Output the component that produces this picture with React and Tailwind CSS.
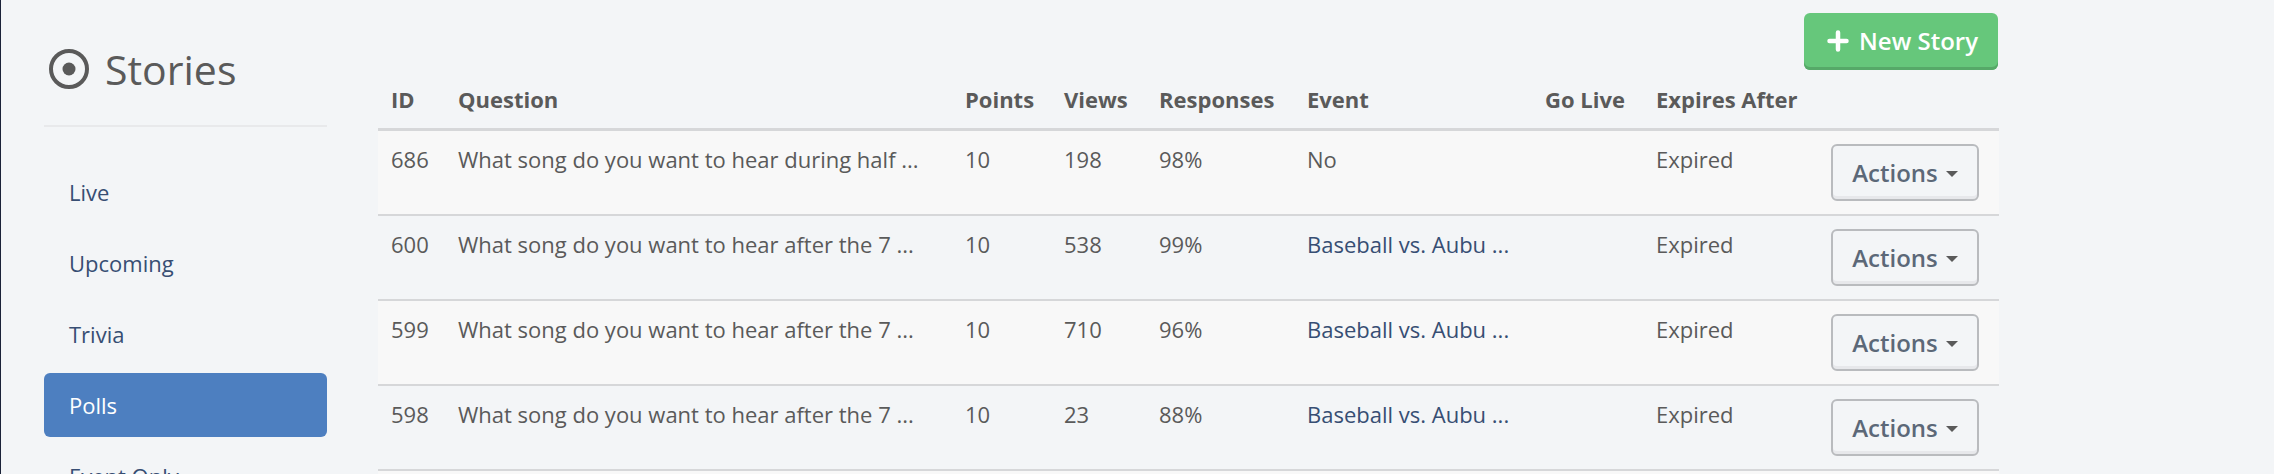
import clsx from "clsx";

const NAV_ITEMS = ["Live", "Upcoming", "Trivia", "Polls", "Event Only"];

const STORIES = [
  { id: 686, question: "What song do you want to hear during half ...", points: 10, views: 198, responses: "98%", event: null, expires: "Expired" },
  { id: 600, question: "What song do you want to hear after the 7 ...", points: 10, views: 538, responses: "99%", event: "Baseball vs. Aubu ...", expires: "Expired" },
  { id: 599, question: "What song do you want to hear after the 7 ...", points: 10, views: 710, responses: "96%", event: "Baseball vs. Aubu ...", expires: "Expired" },
  { id: 598, question: "What song do you want to hear after the 7 ...", points: 10, views: 23, responses: "88%", event: "Baseball vs. Aubu ...", expires: "Expired" },
];

const COLUMNS = [
  { label: "ID", width: "w-[67px]" },
  { label: "Question", width: "" },
  { label: "Points", width: "w-[99px]" },
  { label: "Views", width: "w-[95px]" },
  { label: "Responses", width: "w-[148px]" },
  { label: "Event", width: "w-[238px]" },
  { label: "Go Live", width: "w-[111px]" },
  { label: "Expires After", width: "w-[175px]" },
  { label: "", width: "w-[181px]" },
];

function Sidebar({ active }) {
  return (
    <aside className="w-[283px] shrink-0">
      <h1 className="flex h-[127px] items-center gap-4 border-b-2 border-[#e8e9eb] pt-3 pl-[5px] text-[41px]">
        <svg viewBox="0 0 40 40" className="size-10" aria-hidden="true">
          <circle cx="20" cy="20" r="18" fill="none" stroke="currentColor" strokeWidth="4" />
          <circle cx="20" cy="20" r="6.5" fill="currentColor" />
        </svg>
        Stories
      </h1>
      <nav className="mt-[33px] flex flex-col gap-[7px]">
        {NAV_ITEMS.map((item) => (
          <a
            key={item}
            href="#"
            className={clsx(
              "flex h-16 shrink-0 items-center rounded-md px-[25px]",
              item === active ? "bg-[#4d7fc0] text-white" : "text-[#374e73]"
            )}
          >
            {item}
          </a>
        ))}
      </nav>
    </aside>
  );
}

function ActionsButton() {
  return (
    <button
      type="button"
      className="flex h-[57px] w-[148px] items-center justify-center gap-2 rounded-md border-2 border-[#b9bbbe] bg-[#f3f5f7] text-[24px] font-semibold text-[#5c6878] shadow-[inset_0_-3px_0_#e7e8eb]"
    >
      Actions
      <svg viewBox="0 0 12 6" className="mt-[2px] h-[6px] w-3" aria-hidden="true">
        <path d="M0 0h12L6 6z" fill="#5a5a5a" />
      </svg>
    </button>
  );
}

function StoriesTable() {
  return (
    <table className="w-full table-fixed border-separate border-spacing-0 text-left">
      <thead>
        <tr>
          {COLUMNS.map((col) => (
            <th
              key={col.label}
              className={clsx("border-b-3 border-[#d6d7d9] px-[13px] py-[14px] font-bold whitespace-nowrap", col.width)}
            >
              {col.label}
            </th>
          ))}
        </tr>
      </thead>
      <tbody className="[&_td]:border-b-2 [&_td]:border-[#d6d7d9] [&_td]:px-[13px] [&_td]:py-[13px] [&_td]:align-top [&_td]:whitespace-nowrap [&_tr:nth-child(odd)]:bg-[#f8f8f8]">
        {STORIES.map((story) => (
          <tr key={story.id}>
            <td>{story.id}</td>
            <td>{story.question}</td>
            <td>{story.points}</td>
            <td>{story.views}</td>
            <td>{story.responses}</td>
            <td>
              {story.event ? (
                <a href="#" className="text-[#374e73]">{story.event}</a>
              ) : (
                "No"
              )}
            </td>
            <td />
            <td>{story.expires}</td>
            <td>
              <ActionsButton />
            </td>
          </tr>
        ))}
        <tr>
          <td colSpan={COLUMNS.length} className="h-[85px]" />
        </tr>
      </tbody>
    </table>
  );
}

export default function App() {
  return (
    <div className="flex h-screen items-start gap-[51px] overflow-hidden border-l border-[#1a2238] bg-[#f3f5f7] pr-[275px] pl-[43px] font-['Open_Sans',sans-serif] text-[22px] leading-[30px] text-[#5a5a5a]">
      <Sidebar active="Polls" />
      <main className="min-w-0 flex-1 pt-[13px]">
        <div className="flex justify-end pr-px">
          <button
            type="button"
            className="flex h-[57px] w-[194px] items-center justify-center gap-[10px] rounded-md bg-[#66c77b] pb-[2px] pl-[3px] text-[24px] font-semibold text-white shadow-[inset_0_-3px_0_#56a968]"
          >
            <svg viewBox="0 0 22 22" className="size-[22px]" aria-hidden="true">
              <path d="M11 2.5v17M2.5 11h17" stroke="currentColor" strokeWidth="4.5" strokeLinecap="round" />
            </svg>
            New Story
          </button>
        </div>
        <StoriesTable />
      </main>
    </div>
  );
}
